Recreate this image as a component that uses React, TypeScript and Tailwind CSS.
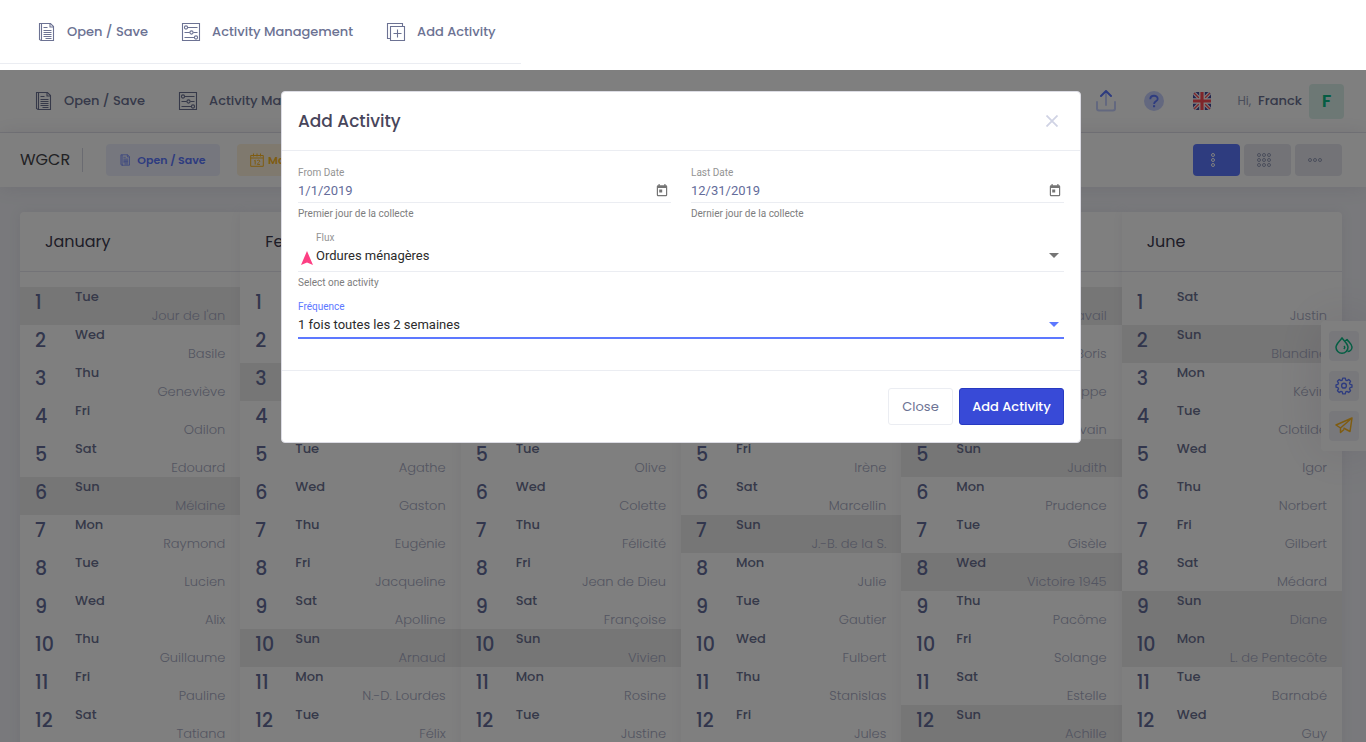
import type { ReactNode } from "react";

const WEEK = ["Sun", "Mon", "Tue", "Wed", "Thu", "Fri", "Sat"];

type Month = { name: string; first: number; off: number[]; saints: string[] };

const MONTHS: Month[] = [
  { name: "January", first: 2, off: [1, 6], saints: ["Jour de l'an", "Basile", "Geneviève", "Odilon", "Edouard", "Mélaine", "Raymond", "Lucien", "Alix", "Guillaume", "Pauline", "Tatiana"] },
  { name: "February", first: 5, off: [3, 10], saints: ["Ella", "Présentation", "Blaise", "Véronique", "Agathe", "Gaston", "Eugènie", "Jacqueline", "Apolline", "Arnaud", "N.-D. Lourdes", "Félix"] },
  { name: "March", first: 5, off: [3, 10], saints: ["Aubin", "Charles", "Guénolé", "Casimir", "Olive", "Colette", "Félicité", "Jean de Dieu", "Françoise", "Vivien", "Rosine", "Justine"] },
  { name: "April", first: 1, off: [7], saints: ["Hugues", "Sandrine", "Richard", "Isidore", "Irène", "Marcellin", "J.-B. de la S.", "Julie", "Gautier", "Fulbert", "Stanislas", "Jules"] },
  { name: "May", first: 3, off: [1, 5, 8, 12], saints: ["Fête du travail", "Boris", "Philippe", "Sylvain", "Judith", "Prudence", "Gisèle", "Victoire 1945", "Pacôme", "Solange", "Estelle", "Achille"] },
  { name: "June", first: 6, off: [2, 9, 10], saints: ["Justin", "Blandine", "Kévin", "Clotilde", "Igor", "Norbert", "Gilbert", "Médard", "Diane", "L. de Pentecôte", "Barnabé", "Guy"] },
];

function DocIcon({ className }: { className: string }) {
  return (
    <svg viewBox="0 0 18 20" className={className} fill="none" stroke="currentColor" strokeWidth="1.1" aria-hidden="true">
      <path d="M3.500 1.500h9l3 3v14h-12z" />
      <path d="M12 1.500V5h3.500M3.500 1.500h-2v16l1.500 1h1.500" />
      <path d="M5.500 5.500h4M5.500 8.500h8M5.500 10.500h8M5.500 12.500h8M5.500 14.500h8M7.500 16.500h6" />
    </svg>
  );
}

function SlidersIcon({ className }: { className: string }) {
  return (
    <svg viewBox="0 0 20 20" className={className} fill="none" stroke="currentColor" strokeWidth="1.1" aria-hidden="true">
      <path d="M1.500 1.500h17v17h-17z" />
      <circle cx="5" cy="5.500" r="1.600" />
      <circle cx="10.500" cy="10.500" r="1.600" />
      <circle cx="15" cy="15.500" r="1.600" />
      <path d="M6.800 5.500H16.500M3.500 10.500h5.300M12.300 10.500H16.500M3.500 15.500h9.700" />
    </svg>
  );
}

function AddIcon({ className }: { className: string }) {
  return (
    <svg viewBox="0 0 20 20" className={className} fill="none" stroke="currentColor" strokeWidth="1.1" aria-hidden="true">
      <path d="M4.500 4.500h14v14h-14z" />
      <path d="M4.500 16.500h-3v-15h15v3M11.500 7.500v8M7.500 11.500h8" />
    </svg>
  );
}

function CalendarTwelveIcon() {
  return (
    <svg viewBox="0 0 14 14" className="size-3.5" fill="none" stroke="currentColor" aria-hidden="true">
      <path d="M.7 2.500h12.600v10.800H.7zM.7 5h12.600M3.500.5v3M7 .5v3M10.500.5v3" />
      <path d="M4.200 8l1-.8v4.300M7.300 8c0-1.200 2.500-1.200 2.500.2 0 1-2.500 2-2.500 3.200h2.700" />
    </svg>
  );
}

function Dots({ cols, rows }: { cols: number; rows: number }) {
  const dots: ReactNode[] = [];
  for (let r = 0; r < rows; r++) {
    for (let c = 0; c < cols; c++) {
      dots.push(<circle key={`${r}-${c}`} cx={2 + c * 5} cy={2 + r * 5} r="1.500" />);
    }
  }
  return (
    <svg width={cols * 5 - 1} height={rows * 5 - 1} fill="none" stroke="currentColor" aria-hidden="true">
      {dots}
    </svg>
  );
}

function FlagIcon() {
  return (
    <svg viewBox="0 0 18 18" className="size-[18px] rounded-sm" aria-hidden="true">
      <path fill="#41479b" d="M0 0h18v18H0z" />
      <path stroke="#fff" strokeWidth="3.600" d="M0 0l18 18M18 0L0 18" />
      <path stroke="#ff4b55" strokeWidth="1.400" d="M0 0l18 18M18 0L0 18" />
      <path stroke="#fff" strokeWidth="5.600" d="M9 0v18M0 9h18" />
      <path stroke="#ff4b55" strokeWidth="3.200" d="M9 0v18M0 9h18" />
    </svg>
  );
}

function MainMenu() {
  const link = "flex items-center gap-[11px] whitespace-nowrap text-[13px] font-medium leading-5 text-[#6c7293]";
  return (
    <nav className="flex items-center gap-[33px]">
      <a href="#open" className={link}>
        <DocIcon className="h-5 w-[18px]" />
        Open / Save
      </a>
      <a href="#manage" className={link}>
        <SlidersIcon className="size-5" />
        Activity Management
      </a>
      <a href="#add" className={link}>
        <AddIcon className="size-5" />
        Add Activity
      </a>
    </nav>
  );
}

function UserBar() {
  return (
    <div className="flex items-center">
      <button aria-label="Share" className="mr-[27px]">
        <svg viewBox="0 0 22 22" className="size-[22px]" fill="none" stroke="#5d78ff" strokeWidth="2" strokeLinecap="round" aria-hidden="true">
          <path opacity=".35" d="M2 12v6.500A2 2 0 0 0 4 20.500h14a2 2 0 0 0 2-2V12M11 3v12" />
          <path strokeLinejoin="round" d="M6 6l5-5 5 5" />
        </svg>
      </button>
      <button aria-label="Help" className="mr-[29px]">
        <svg viewBox="0 0 20 20" className="size-5" fill="none" aria-hidden="true">
          <circle cx="10" cy="10" r="10" fill="#5d78ff" opacity=".35" />
          <path stroke="#5d78ff" strokeWidth="1.800" d="M6.300 8.200c0-4.600 7.400-4.500 7.400-.3 0 2.400-3.600 2.500-3.600 5" />
          <path fill="#5d78ff" d="M9 14.200h2.100v2H9z" />
        </svg>
      </button>
      <button aria-label="Language" className="mr-[26px]">
        <FlagIcon />
      </button>
      <span className="mr-[7px] text-xs text-[#959cb6]">Hi,</span>
      <span className="mr-[7px] text-[13px] font-medium text-[#6c7293]">Franck</span>
      <span className="flex size-[35px] items-center justify-center rounded bg-[#daf1ea] text-lg font-semibold text-[#0abb87]">F</span>
    </div>
  );
}

function Toolbar() {
  const tool = "flex h-8 w-[47px] items-center justify-center rounded pr-2";
  return (
    <div className="flex h-[54px] items-center bg-white pl-5 pr-6 shadow-[0_0_20px_rgba(82,63,105,0.12)]">
      <h1 className="w-[63px] border-r border-[#d5d7e2] text-base leading-6 text-[#434349]">WGCR</h1>
      <button className="ml-[23px] flex h-8 w-[114px] items-center justify-center gap-1.5 whitespace-nowrap rounded bg-[#eceffd] text-[11px] font-semibold text-[#5d78ff]">
        <DocIcon className="h-3.5 w-[11px]" />
        Open / Save
      </button>
      <button className="ml-[17px] flex h-8 w-[108px] items-center gap-1 rounded bg-[#fff3dc] pl-[13px] text-[11px] font-semibold text-[#ffb822]">
        <CalendarTwelveIcon />
        Manage
      </button>
      <div className="ml-auto flex gap-1">
        <button aria-label="One column" className={tool + " bg-[#5d78ff] text-white"}>
          <Dots cols={1} rows={3} />
        </button>
        <button aria-label="Grid" className={tool + " bg-[#e6e7ef] text-[#959cb6]"}>
          <Dots cols={3} rows={3} />
        </button>
        <button aria-label="One row" className={tool + " bg-[#e6e7ef] text-[#959cb6]"}>
          <Dots cols={3} rows={1} />
        </button>
      </div>
    </div>
  );
}

function MonthCard({ month }: { month: Month }) {
  return (
    <section className="min-w-0 flex-1 bg-white pb-4 shadow-[0_0_13px_rgba(82,63,105,0.08)] first:rounded-tl last:rounded-tr">
      <h2 className="flex h-[60px] items-center border-b border-[#e6e7ef] px-[25px] text-base text-[#3c3a4f]">{month.name}</h2>
      <ul className="pt-[15px]">
        {month.saints.map((saint, i) => (
          <li key={saint} className={month.off.includes(i + 1) ? "flex h-[38px] bg-[#ededed] px-[15px]" : "flex h-[38px] px-[15px]"}>
            <span className="w-10 pt-1 text-[19px] font-medium leading-6 text-[#646c9a]">{i + 1}</span>
            <div className="flex min-w-0 flex-1 flex-col">
              <span className="text-[13px] font-medium leading-[19px] text-[#6c7293]">{WEEK[(month.first + i) % 7]}</span>
              <span className="whitespace-nowrap text-right text-[13px] font-light leading-[19px] text-[#a7abc3]">{saint}</span>
            </div>
          </li>
        ))}
      </ul>
    </section>
  );
}

function SideTools() {
  const box = "flex size-[30px] items-center justify-center rounded bg-[#f0f1f7]";
  return (
    <div className="absolute right-0 top-[251px] flex flex-col gap-2.5 rounded-l bg-white py-2.5 pl-2 pr-[7px] shadow-[0_0_50px_rgba(82,63,105,0.15)]">
      <button aria-label="Theme" className={box + " text-[#0abb87]"}>
        <svg viewBox="0 0 18 18" className="size-[18px]" fill="none" stroke="currentColor" strokeWidth="1.500" strokeLinejoin="round" aria-hidden="true">
          <path d="M7 .8C5 4 1 6.800 1 10.300a6 6 0 0 0 12 0C13 6.800 9 4 7 .8z" />
          <path d="M10 4L12 2.500c1.500 2.500 5 4.500 5 7.500 0 2.500-2 4.500-4.500 4.500M9 9c1 1 1 2-.2 3" />
        </svg>
      </button>
      <button aria-label="Settings" className={box + " text-[#5d78ff]"}>
        <svg viewBox="0 0 24 24" className="size-[18px]" fill="none" stroke="currentColor" strokeWidth="1.800" strokeLinejoin="round" aria-hidden="true">
          <circle cx="12" cy="11.500" r="3.200" />
          <path d="M10.300 1.500h3.400l.6 2.600 1.700.7 2.300-1.400 2.400 2.400-1.400 2.300.7 1.700 2.600.6v3.200l-2.600.6-.7 1.700 1.400 2.300-2.400 2.400-2.300-1.400-1.700.7-.6 2.600h-3.400l-.6-2.600-1.700-.7-2.300 1.400-2.400-2.400 1.400-2.300-.7-1.700-2.600-.6v-3.200l2.600-.6.7-1.700-1.400-2.300 2.400-2.400L8 4.800l1.700-.7z" />
        </svg>
      </button>
      <button aria-label="Send" className={box + " text-[#ffb822]"}>
        <svg viewBox="0 0 18 18" className="size-[18px]" fill="none" stroke="currentColor" strokeWidth="1.500" strokeLinejoin="round" aria-hidden="true">
          <path d="M17 1L1 8l4.500 3L17 1zM17 1L5.500 11v4.500L9 12.500M17 1L15 14.500 8.500 11" />
        </svg>
      </button>
    </div>
  );
}

function DateField({ id, label, value, hint }: { id: string; label: string; value: string; hint: string }) {
  return (
    <div className="min-w-0 flex-1">
      <label htmlFor={id} className="block text-[10px] leading-[15px] text-[#949494]">{label}</label>
      <div className="flex h-[23px] items-start border-b border-[#ebedf2] pr-[3px]">
        <input id={id} defaultValue={value} className="h-5 min-w-0 flex-1 bg-transparent text-[13px] text-[#646c9a] outline-none" />
        <button aria-label={`Pick ${label}`} className="pt-1 text-[#757575]">
          <svg viewBox="0 0 12 13" className="h-[13px] w-3" fill="currentColor" aria-hidden="true">
            <path fillRule="evenodd" d="M2.500 0h1.200v1.200h4.600V0h1.200v1.200H10a1.200 1.200 0 0 1 1.200 1.200V11a1.200 1.200 0 0 1-1.200 1.200H2A1.200 1.200 0 0 1 .8 11V2.400A1.200 1.200 0 0 1 2 1.200h.5zM2 4v7h8V4z" />
            <path d="M3.200 5.500h3v3h-3z" />
          </svg>
        </button>
      </div>
      <p className="pt-1 text-[10px] leading-[14px] text-[#7d7d7d]">{hint}</p>
    </div>
  );
}

function Caret({ className }: { className: string }) {
  return (
    <svg viewBox="0 0 10 5" className={`pointer-events-none absolute right-[5px] top-2 h-[5px] w-2.5 ${className}`} fill="currentColor" aria-hidden="true">
      <path d="M0 0h10L5 5z" />
    </svg>
  );
}

function AddActivityDialog() {
  const select = "block h-5 w-full appearance-none bg-transparent text-[13px] text-[#2b2b2b] outline-none";
  return (
    <div role="dialog" aria-labelledby="dialog-title" className="w-[800px] max-w-full rounded border border-[#dcdce4] bg-white">
      <header className="flex h-[59px] items-center justify-between border-b border-[#ebedf2] pl-4 pr-[22px]">
        <h2 id="dialog-title" className="text-[17px] font-medium leading-6 text-[#48465b]">Add Activity</h2>
        <button aria-label="Dismiss" className="text-[#d0d3e4]">
          <svg viewBox="0 0 12 12" className="size-3" stroke="currentColor" strokeWidth="1.800" aria-hidden="true">
            <path d="M.5.5l11 11M11.500.5l-11 11" />
          </svg>
        </button>
      </header>
      <form className="flex flex-col gap-2 px-4 pb-[31px] pt-3.5 font-['Roboto',sans-serif]">
        <div className="flex gap-5">
          <DateField id="from" label="From Date" value="1/1/2019" hint="Premier jour de la collecte" />
          <DateField id="last" label="Last Date" value="12/31/2019" hint="Dernier jour de la collecte" />
        </div>
        <div>
          <div className="flex items-end border-b border-[#ebedf2] pb-[5px]">
            <svg viewBox="0 0 12 14" className="mx-[3px] mb-px h-3.5 w-3" fill="#fd3f83" aria-hidden="true">
              <path d="M6 0l6 14-6-2.500L0 14z" />
            </svg>
            <div className="min-w-0 flex-1">
              <label htmlFor="flux" className="block pt-px text-[10px] leading-[15px] text-[#949494]">Flux</label>
              <div className="relative pt-px">
                <select id="flux" className={select}>
                  <option>Ordures ménagères</option>
                </select>
                <Caret className="text-[#757575]" />
              </div>
            </div>
          </div>
          <p className="pt-1 text-[10px] leading-[14px] text-[#7d7d7d]">Select one activity</p>
        </div>
        <div className="border-b-2 border-[#5d78ff] pb-0.5">
          <label htmlFor="frequence" className="block pt-px text-[10px] leading-[15px] text-[#5d78ff]">Fréquence</label>
          <div className="relative pt-px">
            <select id="frequence" className={select}>
              <option>1 fois toutes les 2 semaines</option>
            </select>
            <Caret className="text-[#5d78ff]" />
          </div>
        </div>
      </form>
      <footer className="flex justify-end gap-1.5 border-t border-[#ebedf2] px-4 py-[17px] text-[13px]">
        <button className="h-[37px] w-[65px] rounded-[3px] border border-[#ebedf2] text-[#6c7293]">Close</button>
        <button className="h-[37px] w-[105px] whitespace-nowrap rounded-[3px] border border-[#2739c1] bg-[#384ad7] font-medium text-white">Add Activity</button>
      </footer>
    </div>
  );
}

export default function App() {
  return (
    <div className="flex h-screen flex-col overflow-hidden bg-white font-['Poppins','Inter',sans-serif]">
      <div className="h-[70px] shrink-0">
        <div className="flex h-16 w-[521px] items-center border-b border-[#ebedf2] pl-[38px]">
          <MainMenu />
        </div>
      </div>
      <div className="relative min-h-0 flex-1 overflow-hidden bg-[#f2f3f8]">
        <div className="flex h-[63px] items-center justify-between border-b border-[#e6e7ef] bg-white pl-[35px] pr-[22px]">
          <MainMenu />
          <UserBar />
        </div>
        <Toolbar />
        <main className="flex pl-5 pr-6 pt-[25px]">
          {MONTHS.map((month) => (
            <MonthCard key={month.name} month={month} />
          ))}
        </main>
        <SideTools />
        <div className="absolute inset-0 flex items-start justify-center bg-black/50 pr-1 pt-[21px]">
          <AddActivityDialog />
        </div>
      </div>
    </div>
  );
}
